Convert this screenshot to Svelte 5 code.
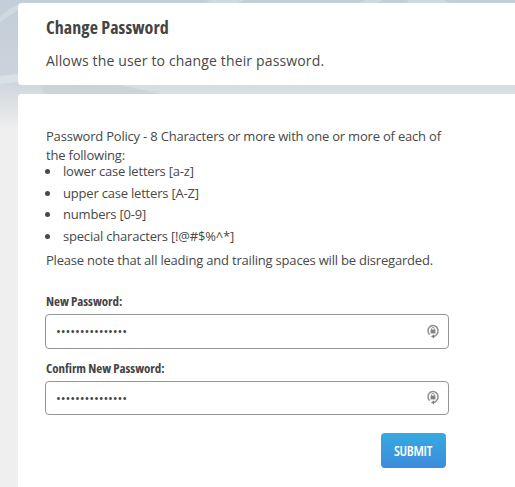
<script lang="ts">
  const rules = [
    'lower case letters [a-z]',
    'upper case letters [A-Z]',
    'numbers [0-9]',
    'special characters [!@#$%^*]'
  ];

  let newPassword = $state('Password-123456');
  let confirmPassword = $state('Password-123456');
</script>

{#snippet lockIcon()}
  <svg class="lock-icon" viewBox="0 0 12 15" aria-hidden="true">
    <path d="M2.6 10.6A5 5.2 0 1 1 9.8 10.2Q8.8 12.4 6.4 12.4" fill="none" stroke="#8e8e8e" stroke-width="1.5" />
    <path d="M7.1 10.2v4.4L4 12.4z" fill="#808080" />
    <path d="M4.6 6V4.8a1.4 1.4 0 0 1 2.8 0V6" fill="none" stroke="#999" stroke-width=".9" />
    <rect x="3.6" y="5.6" width="4.8" height="3.8" fill="#808080" />
  </svg>
{/snippet}

<div class="page">
  <svg class="backdrop" viewBox="0 0 515 130" preserveAspectRatio="none" aria-hidden="true">
    <defs>
      <linearGradient id="sky" x1="0" y1="0" x2="0" y2="1">
        <stop offset="0" stop-color="#c2ced9" />
        <stop offset=".55" stop-color="#cbd2da" />
        <stop offset=".68" stop-color="#d3d9de" />
        <stop offset=".85" stop-color="#e2e4e6" />
        <stop offset="1" stop-color="#efefef" />
      </linearGradient>
    </defs>
    <rect width="515" height="130" fill="url(#sky)" />
    <path d="M0 17L9 9L18 5V10L6 18L0 23zM210 0h35l-8 3h-32zM365 0h18l-6 3h-18zM407 0h37l6 3h-42z" fill="#dbe3e9" opacity=".5" />
    <path d="M0 76L18 74V82L0 84z" fill="#d8e1e6" />
    <path d="M40 85H115L160 91L160 94H45z" fill="#c8ced4" opacity=".6" />
    <path d="M120 85H515V94H160z" fill="#d9e0e4" opacity=".7" />
  </svg>

  <header class="card intro">
    <h1>Change Password</h1>
    <p>Allows the user to change their password.</p>
  </header>

  <main class="card body">
    <p class="policy">Password Policy - 8 Characters or more with one or more of each of<br />the following:</p>
    <ul>
      {#each rules as rule}
        <li><span>{rule}</span></li>
      {/each}
    </ul>
    <p class="note">Please note that all leading and trailing spaces will be disregarded.</p>

    <label for="new-password">New Password:</label>
    <div class="field">
      <input id="new-password" type="password" bind:value={newPassword} />
      {@render lockIcon()}
    </div>

    <label for="confirm-password">Confirm New Password:</label>
    <div class="field confirm">
      <input id="confirm-password" type="password" bind:value={confirmPassword} />
      {@render lockIcon()}
    </div>

    <div class="actions">
      <button type="button">SUBMIT</button>
    </div>
  </main>
</div>

<style>
  :global(body) {
    overflow: hidden;
    background: #efefef;
  }

  .page {
    position: relative;
    box-sizing: border-box;
    height: 487px;
    padding: 3px 0 0 18px;
    color: #444;
    font-family: 'Open Sans', sans-serif;
    overflow: hidden;
  }

  .backdrop {
    position: absolute;
    top: 0;
    left: 0;
    width: 100%;
    height: 130px;
  }

  .card {
    position: relative;
    box-sizing: border-box;
    background: #fff;
  }

  .intro {
    height: 82px;
    padding: 11px 28px 0;
    border-radius: 4px 0 0 4px;
  }

  h1 {
    margin: 0;
    font-size: 18px;
    line-height: 26px;
    font-weight: 700;
    font-stretch: 75%;
    letter-spacing: 0.07px;
  }

  p,
  li {
    color: #484848;
    letter-spacing: -0.2px;
    white-space: nowrap;
  }

  p {
    margin: 0;
  }

  .intro p {
    margin-top: 11px;
    font-size: 14px;
    line-height: 20px;
    letter-spacing: 0.15px;
  }

  .body {
    height: 400px;
    margin-top: 9px;
    padding: 33px 66px 0 27px;
    border-radius: 4px 0 0;
    font-size: 13px;
  }

  .policy {
    margin-left: 1px;
    line-height: 19px;
  }

  ul {
    margin: -4px 0 0;
    padding-left: 16px;
  }

  li {
    line-height: 21.7px;
  }

  li span {
    margin-left: 2px;
  }

  .note {
    margin: 2px 0 20px 1px;
    line-height: 20px;
  }

  label {
    display: block;
    margin-left: 1px;
    font-size: 13px;
    line-height: 22px;
    font-weight: 700;
    font-stretch: 75%;
    letter-spacing: -0.06px;
  }

  .field {
    display: flex;
    align-items: center;
    box-sizing: border-box;
    width: 404px;
    height: 35px;
    margin: 2px 0 8px;
    padding: 0 9px 0 10px;
    border: 1px solid #969696;
    border-radius: 4px;
  }

  .field.confirm {
    height: 34px;
  }

  input {
    flex: 1;
    min-width: 0;
    padding: 0;
    border: 0;
    outline: 0;
    background: none;
    color: #444;
    font: 13px 'Open Sans', sans-serif;
    letter-spacing: -0.15px;
  }

  .lock-icon {
    width: 12px;
    height: 15px;
  }

  .actions {
    display: flex;
    justify-content: flex-end;
    width: 401px;
    margin-top: 18px;
  }

  button {
    width: 65px;
    height: 35px;
    padding: 0 1px 0 0;
    border: 0;
    border-radius: 4px;
    background: linear-gradient(#36aae0, #3d8bda);
    color: #fff;
    font: 600 14px 'Open Sans', sans-serif;
    font-stretch: 75%;
    letter-spacing: -0.3px;
  }
</style>
